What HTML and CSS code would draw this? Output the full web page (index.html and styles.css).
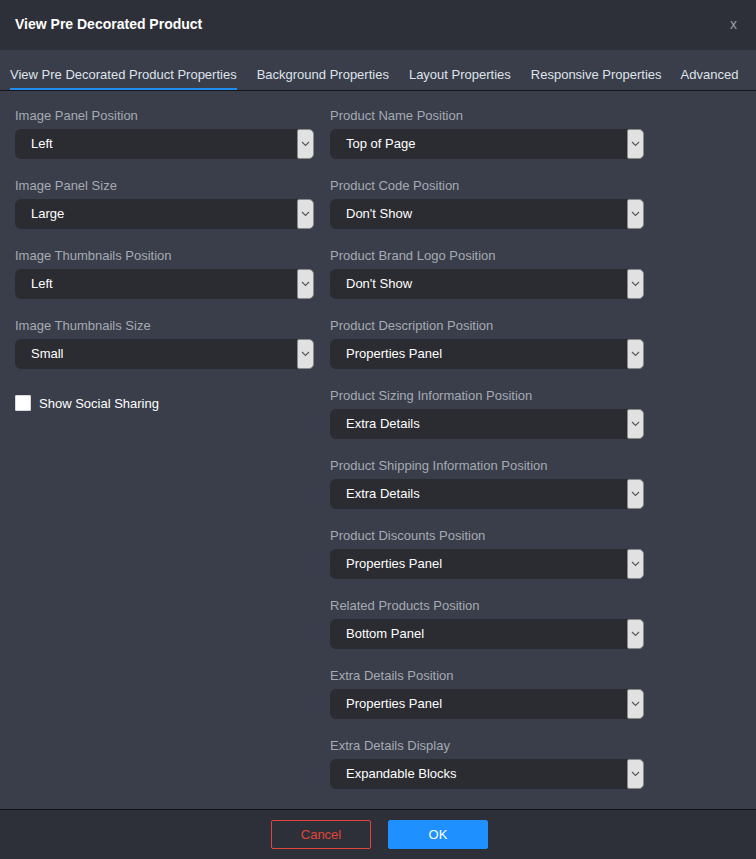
FILE: index.html
```html
<!DOCTYPE html>
<html>
<head>
<meta charset="utf-8">
<link rel="stylesheet" href="styles.css">
</head>
<body>
<div class="dialog">
  <div class="header">
    <div class="title">View Pre Decorated Product</div>
    <div class="close">x</div>
  </div>
  <div class="tabs">
    <div class="tab active">View Pre Decorated Product Properties</div>
    <div class="tab">Background Properties</div>
    <div class="tab">Layout Properties</div>
    <div class="tab">Responsive Properties</div>
    <div class="tab">Advanced</div>
  </div>
  <div class="content">
    <div class="col left">
      <div class="field"><div class="label">Image Panel Position</div><div class="select"><span class="value">Left</span><span class="arrow"><svg width="9" height="6" viewBox="0 0 9 6"><path d="M1 1 L4.5 4.5 L8 1" fill="none" stroke="#555" stroke-width="1.1"/></svg></span></div></div>
      <div class="field"><div class="label">Image Panel Size</div><div class="select"><span class="value">Large</span><span class="arrow"><svg width="9" height="6" viewBox="0 0 9 6"><path d="M1 1 L4.5 4.5 L8 1" fill="none" stroke="#555" stroke-width="1.1"/></svg></span></div></div>
      <div class="field"><div class="label">Image Thumbnails Position</div><div class="select"><span class="value">Left</span><span class="arrow"><svg width="9" height="6" viewBox="0 0 9 6"><path d="M1 1 L4.5 4.5 L8 1" fill="none" stroke="#555" stroke-width="1.1"/></svg></span></div></div>
      <div class="field"><div class="label">Image Thumbnails Size</div><div class="select"><span class="value">Small</span><span class="arrow"><svg width="9" height="6" viewBox="0 0 9 6"><path d="M1 1 L4.5 4.5 L8 1" fill="none" stroke="#555" stroke-width="1.1"/></svg></span></div></div>
      <label class="check"><span class="box"></span><span>Show Social Sharing</span></label>
    </div>
    <div class="col right">
      <div class="field"><div class="label">Product Name Position</div><div class="select"><span class="value">Top of Page</span><span class="arrow"><svg width="9" height="6" viewBox="0 0 9 6"><path d="M1 1 L4.5 4.5 L8 1" fill="none" stroke="#555" stroke-width="1.1"/></svg></span></div></div>
      <div class="field"><div class="label">Product Code Position</div><div class="select"><span class="value">Don't Show</span><span class="arrow"><svg width="9" height="6" viewBox="0 0 9 6"><path d="M1 1 L4.5 4.5 L8 1" fill="none" stroke="#555" stroke-width="1.1"/></svg></span></div></div>
      <div class="field"><div class="label">Product Brand Logo Position</div><div class="select"><span class="value">Don't Show</span><span class="arrow"><svg width="9" height="6" viewBox="0 0 9 6"><path d="M1 1 L4.5 4.5 L8 1" fill="none" stroke="#555" stroke-width="1.1"/></svg></span></div></div>
      <div class="field"><div class="label">Product Description Position</div><div class="select"><span class="value">Properties Panel</span><span class="arrow"><svg width="9" height="6" viewBox="0 0 9 6"><path d="M1 1 L4.5 4.5 L8 1" fill="none" stroke="#555" stroke-width="1.1"/></svg></span></div></div>
      <div class="field"><div class="label">Product Sizing Information Position</div><div class="select"><span class="value">Extra Details</span><span class="arrow"><svg width="9" height="6" viewBox="0 0 9 6"><path d="M1 1 L4.5 4.5 L8 1" fill="none" stroke="#555" stroke-width="1.1"/></svg></span></div></div>
      <div class="field"><div class="label">Product Shipping Information Position</div><div class="select"><span class="value">Extra Details</span><span class="arrow"><svg width="9" height="6" viewBox="0 0 9 6"><path d="M1 1 L4.5 4.5 L8 1" fill="none" stroke="#555" stroke-width="1.1"/></svg></span></div></div>
      <div class="field"><div class="label">Product Discounts Position</div><div class="select"><span class="value">Properties Panel</span><span class="arrow"><svg width="9" height="6" viewBox="0 0 9 6"><path d="M1 1 L4.5 4.5 L8 1" fill="none" stroke="#555" stroke-width="1.1"/></svg></span></div></div>
      <div class="field"><div class="label">Related Products Position</div><div class="select"><span class="value">Bottom Panel</span><span class="arrow"><svg width="9" height="6" viewBox="0 0 9 6"><path d="M1 1 L4.5 4.5 L8 1" fill="none" stroke="#555" stroke-width="1.1"/></svg></span></div></div>
      <div class="field"><div class="label">Extra Details Position</div><div class="select"><span class="value">Properties Panel</span><span class="arrow"><svg width="9" height="6" viewBox="0 0 9 6"><path d="M1 1 L4.5 4.5 L8 1" fill="none" stroke="#555" stroke-width="1.1"/></svg></span></div></div>
      <div class="field"><div class="label">Extra Details Display</div><div class="select"><span class="value">Expandable Blocks</span><span class="arrow"><svg width="9" height="6" viewBox="0 0 9 6"><path d="M1 1 L4.5 4.5 L8 1" fill="none" stroke="#555" stroke-width="1.1"/></svg></span></div></div>
    </div>
  </div>
  <div class="footer">
    <button class="btn cancel">Cancel</button>
    <button class="btn ok">OK</button>
  </div>
</div>
</body>
</html>
```

FILE: styles.css
```css
html, body {
  margin: 0;
  padding: 0;
  background: #393e4a;
}
body {
  font-family: "Liberation Sans", Arial, sans-serif;
  font-size: 13px;
  color: #ffffff;
}
.dialog {
  width: 756px;
  height: 859px;
  display: flex;
  flex-direction: column;
  background: #393e4a;
}
.header {
  height: 50px;
  flex: 0 0 50px;
  background: #2d3039;
  display: flex;
  align-items: center;
  justify-content: space-between;
  padding: 0 19px 0 15px;
  box-sizing: border-box;
}
.title {
  font-size: 14px;
  font-weight: bold;
  color: #ffffff;
  margin-top: -2px;
}
.close {
  font-size: 14px;
  color: #9a9ea6;
  margin-top: -2px;
}
.tabs {
  height: 41px;
  flex: 0 0 41px;
  box-sizing: border-box;
  border-bottom: 1px solid #15171b;
  display: flex;
  align-items: flex-end;
  padding-left: 10px;
  gap: 20px;
}
.tab {
  color: #dfe3ea;
  height: 38px;
  line-height: 18px;
  padding-top: 14px;
  box-sizing: border-box;
  border-bottom: 2px solid transparent;
  white-space: nowrap;
}
.tab:nth-child(4) {
  margin-right: -1px;
}
.tab.active {
  border-bottom-color: #1e8ff0;
}
.content {
  flex: 1;
  display: flex;
  padding: 17px 0 0 15px;
  gap: 16px;
}
.col.left {
  width: 299px;
}
.col.right {
  width: 314px;
}
.field {
  margin-bottom: 19px;
}
.label {
  color: #a6aab2;
  line-height: 16px;
  margin-bottom: 5px;
  white-space: nowrap;
}
.select {
  height: 30px;
  display: flex;
  background: #2b2c31;
  border-radius: 6px;
}
.value {
  flex: 1;
  padding-left: 16px;
  line-height: 30px;
  color: #ffffff;
}
.arrow {
  width: 17px;
  height: 30px;
  box-sizing: border-box;
  background: #e1e1e1;
  border: 1px solid #8a8a8a;
  border-radius: 2px 5px 5px 2px;
  display: flex;
  align-items: center;
  justify-content: center;
}
.check {
  display: flex;
  align-items: center;
  gap: 8px;
  margin-top: 26px;
  color: #ffffff;
}
.box {
  width: 16px;
  height: 16px;
  background: #ffffff;
  border-radius: 1px;
  box-sizing: border-box;
  border: 1px solid #d8d8d8;
}
.footer {
  height: 50px;
  flex: 0 0 50px;
  background: #2d3039;
  border-top: 1px solid #111318;
  box-sizing: border-box;
  display: flex;
  justify-content: center;
  align-items: flex-start;
  padding: 10px 0 0 3px;
  gap: 17px;
}
.btn {
  width: 100px;
  height: 29px;
  font-family: "Liberation Sans", Arial, sans-serif;
  font-size: 13px;
  border-radius: 2px;
  box-sizing: border-box;
  cursor: pointer;
}
.cancel {
  background: transparent;
  border: 1px solid #e0453a;
  color: #e0453a;
}
.ok {
  background: #1e90ff;
  border: 1px solid #1e90ff;
  color: #ffffff;
}
```
